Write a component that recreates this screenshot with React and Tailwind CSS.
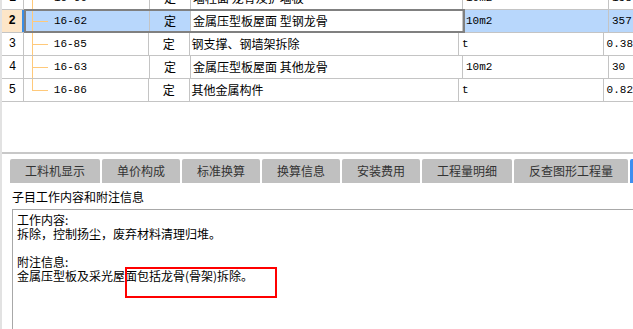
const ROWS = [
  { no: 1, code: '16-60', type: '定', name: '墙柱面 龙骨及护墙板', unit: '10m2', qty: '158' },
  { no: 2, code: '16-62', type: '定', name: '金属压型板屋面 型钢龙骨', unit: '10m2', qty: '357', selected: true },
  { no: 3, code: '16-85', type: '定', name: '钢支撑、钢墙架拆除', unit: 't', qty: '0.38' },
  { no: 4, code: '16-63', type: '定', name: '金属压型板屋面 其他龙骨', unit: '10m2', qty: '30' },
  { no: 5, code: '16-86', type: '定', name: '其他金属构件', unit: 't', qty: '0.82', last: true },
];

const TABS = [
  { label: '工料机显示', w: 'w-[90px]' },
  { label: '单价构成', w: 'w-[78px]' },
  { label: '标准换算', w: 'w-[78px]' },
  { label: '换算信息', w: 'w-[78px]' },
  { label: '安装费用', w: 'w-[78px]' },
  { label: '工程量明细', w: 'w-[90px]' },
  { label: '反查图形工程量', w: 'w-[114px]' },
];

const cjk = { fontFamily: '"Noto Sans CJK SC", "Liberation Sans", sans-serif' };
const mono = { fontFamily: '"Liberation Mono", "Noto Sans CJK SC", monospace' };

function Row({ row }) {
  const sel = row.selected;
  const cell = 'h-full border-r border-[#c4c4c4] flex items-center';
  return (
    <div className="relative flex h-[23px] border-b border-[#c4c4c4]">
      <div className={`${cell} w-[22px] justify-center text-[12px] ${sel ? 'bg-[#fde6c8] font-bold border-r-[#3a8ee6] border-r-2' : 'bg-white'}`} style={mono}>
        {row.no}
      </div>
      <div className={`${cell} relative w-[126px] pl-[30px] text-[11px] ${sel ? 'bg-[#b8d7fc]' : ''}`} style={mono}>
        <span className={`absolute left-[8px] top-0 w-px bg-[#ffc97a] ${row.last ? 'h-1/2' : 'h-full'}`} />
        <span className="absolute left-[8px] top-1/2 w-[16px] h-px bg-[#ffc97a]" />
        {row.code}
      </div>
      <div className={`${cell} w-[41px] justify-center text-[12px] ${sel ? 'bg-[#b8d7fc]' : ''}`} style={cjk}>
        {row.type}
      </div>
      <div className={`${cell} w-[272px] pl-[2px] text-[12px] whitespace-pre`} style={cjk}>
        {row.name}
      </div>
      <div className={`${cell} w-[146px] pl-[3px] text-[11px] ${sel ? 'bg-[#b8d7fc]' : ''}`} style={mono}>
        {row.unit}
      </div>
      <div className={`h-full flex-1 flex items-center pl-[3px] text-[11px] ${sel ? 'bg-[#b8d7fc]' : ''}`} style={mono}>
        {row.qty}
      </div>
      {sel && (
        <div className="absolute left-[22px] top-[-1px] w-[441px] h-[24px] border-2 border-[#808080] pointer-events-none" />
      )}
    </div>
  );
}

export default function App() {
  return (
    <div className="relative w-[633px] h-[329px] overflow-hidden bg-white border-l-2 border-[#e2e2e2] flex flex-col text-black" style={cjk}>
      {/* Grid */}
      <div className="h-[152px] overflow-hidden">
        <div className="-mt-[13px]">
          {ROWS.map(r => <Row key={r.no} row={r} />)}
        </div>
      </div>

      {/* Lower panel */}
      <div className="flex-1 flex flex-col border-t-2 border-[#c8c8c8]">
        <div className="flex gap-[2px] pl-[8px] pt-[5px]">
          {TABS.map(t => (
            <div key={t.label} className={`${t.w} h-[24px] shrink-0 rounded-t-[2px] bg-[#c0c0c0] flex items-center justify-center text-[12px] text-[#333]`}>
              {t.label}
            </div>
          ))}
          <div className="w-[10px] h-[24px] shrink-0 rounded-tl-[2px] bg-[#3d8ef0]" />
        </div>
        <div className="mt-[7px] pl-[10px] text-[12px] leading-[14px]">子目工作内容和附注信息</div>
        <div className="mt-[5px] ml-[10px] flex-1 border-l border-t border-[#a8a8a8] pl-[4px] pt-[3px] text-[12px] leading-[14px]">
          <div>工作内容:</div>
          <div>拆除，控制扬尘，废弃材料清理归堆。</div>
          <div className="h-[14px]" />
          <div>附注信息:</div>
          <div>金属压型板及采光屋面包括龙骨(骨架)拆除。</div>
        </div>
      </div>

      {/* Annotation box */}
      <div className="absolute left-[123px] top-[267px] w-[152px] h-[31px] border-2 border-[#ff0000] pointer-events-none" />
    </div>
  );
}
